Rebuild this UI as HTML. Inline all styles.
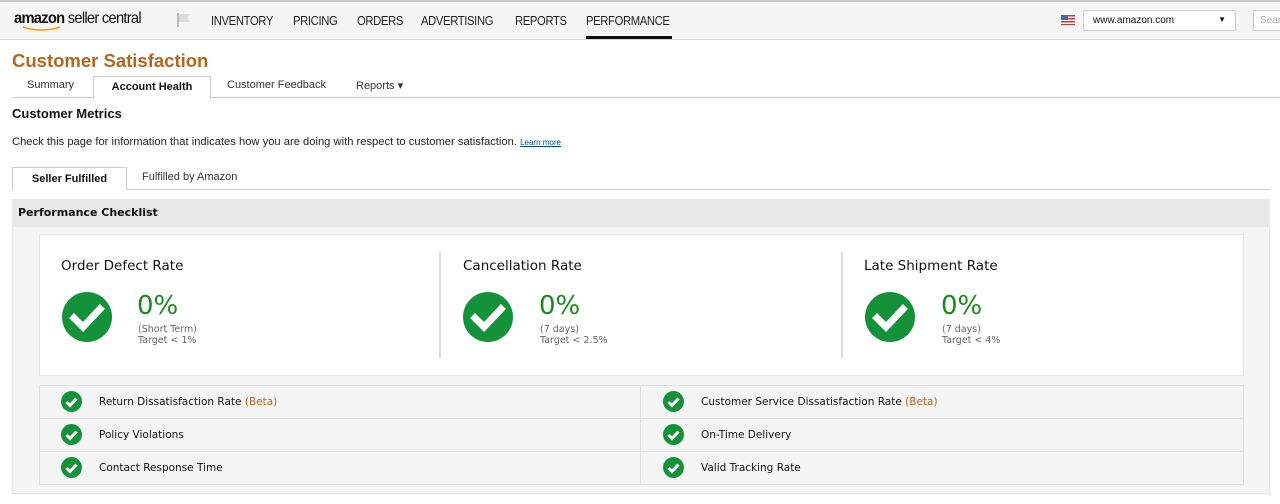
<!DOCTYPE html>
<html><head><meta charset="utf-8"><style>
*{box-sizing:border-box;margin:0;padding:0}
body{width:1280px;height:504px;overflow:hidden;background:#fff;font-family:"Liberation Sans",Arial,sans-serif;color:#111;position:relative}
.a{position:absolute;white-space:nowrap}
.top{position:absolute;left:0;top:0;width:1280px;height:40px;background:#f5f5f5;border-top:2px solid #ccc;border-bottom:1px solid #d5d5d5}
.nav{font-size:12.5px;color:#222;top:14px;letter-spacing:-0.4px;transform:scaleX(0.9);transform-origin:left}
.v{font-family:"DejaVu Sans",Verdana,sans-serif}
.chk{position:absolute;border-radius:50%;background:#13923a}
.chk svg{position:absolute;left:0;top:0;width:100%;height:100%}
</style></head><body>
<div class="top"></div>
<div class="a" style="left:14px;top:10px;font-size:16px;letter-spacing:-0.8px;transform:scaleX(0.92);transform-origin:left"><b>amazon</b> seller central</div>
<svg class="a" style="left:22px;top:26px" width="40" height="6"><path d="M1 1 Q20 7 38 1" stroke="#f90" stroke-width="1.6" fill="none"/></svg>
<svg class="a" style="left:176px;top:12px" width="16" height="16"><path d="M2 1 V15" stroke="#bbb" stroke-width="2"/><path d="M3 2 H14 L11 6 L14 10 H3Z" fill="#ddd"/></svg>
<div class="a nav" style="left:211px">INVENTORY</div>
<div class="a nav" style="left:293px">PRICING</div>
<div class="a nav" style="left:357px">ORDERS</div>
<div class="a nav" style="left:421px">ADVERTISING</div>
<div class="a nav" style="left:515px">REPORTS</div>
<div class="a nav" style="left:586px">PERFORMANCE</div>
<div class="a" style="left:586px;top:36px;width:86px;height:3px;background:#111"></div>
<div class="a" style="left:1061px;top:15px;width:14px;height:10px;background:repeating-linear-gradient(#c33 0 1.5px,#fff 1.5px 3px)"><div style="width:7px;height:5px;background:#46a"></div></div>
<div class="a" style="left:1083px;top:10px;width:153px;height:21px;background:#fff;border:1px solid #ccc;border-radius:2px;font-size:10px;padding:4px 9px">www.amazon.com<span style="position:absolute;right:9px;top:4px;font-size:8px">▼</span></div>
<div class="a" style="left:1253px;top:10px;width:40px;height:21px;background:#fff;border:1px solid #ccc;font-size:10px;color:#aaa;padding:4px 6px">Search</div>

<div class="a" style="left:12px;top:50px;font-size:18.5px;font-weight:bold;color:#b5651d">Customer Satisfaction</div>
<div class="a" style="left:12px;top:97px;width:1268px;height:1px;background:#ccc"></div>
<div class="a" style="left:27px;top:79px;font-size:11px;color:#333">Summary</div>
<div class="a" style="left:93px;top:76px;width:118px;height:23px;background:#fff;border:1px solid #ccc;border-bottom:none;font-size:11px;font-weight:bold;text-align:center;padding-top:4px">Account Health</div>
<div class="a" style="left:227px;top:79px;font-size:11px;color:#333">Customer Feedback</div>
<div class="a" style="left:356px;top:79px;font-size:11px;color:#333">Reports ▾</div>

<div class="a" style="left:12px;top:106px;font-size:13px;font-weight:bold">Customer Metrics</div>
<div class="a" style="left:12px;top:136px;font-size:11.2px;color:#222">Check this page for information that indicates how you are doing with respect to customer satisfaction. <span style="font-size:8px;color:#004b91;text-decoration:underline">Learn more</span></div>
<div class="a" style="left:12px;top:189px;width:1258px;height:1px;background:#ccc"></div>
<div class="a" style="left:12px;top:167px;width:115px;height:23px;background:#fff;border:1px solid #ccc;border-bottom:none;font-size:11px;font-weight:bold;text-align:center;padding-top:5px">Seller Fulfilled</div>
<div class="a" style="left:142px;top:171px;font-size:11px;color:#333">Fulfilled by Amazon</div>

<div class="a" style="left:12px;top:199px;width:1258px;height:295px;background:#f5f5f5;border:1px solid #e3e3e3"></div>
<div class="a" style="left:12px;top:199px;width:1258px;height:28px;background:#e8e8e8"></div>
<div class="a v" style="left:18px;top:206px;font-size:11px;font-weight:bold">Performance Checklist</div>
<div class="a" style="left:39px;top:234px;width:1205px;height:142px;background:#fff;border:1px solid #e5e5e5"></div>
<div class="a" style="left:439px;top:252px;width:2px;height:106px;background:#ddd"></div>
<div class="a" style="left:841px;top:252px;width:2px;height:106px;background:#ddd"></div>

<div class="a v" style="left:61px;top:258px;font-size:13.5px">Order Defect Rate</div>
<div class="chk" style="left:62px;top:292px;width:50px;height:50px"><svg viewBox="0 0 50 50"><path d="M12 26 L21 35 L38 17" stroke="#fff" stroke-width="7" fill="none" stroke-linecap="square"/></svg></div>
<div class="a v" style="left:137px;top:291px;font-size:26px;color:#1a8a1a">0%</div>
<div class="a v" style="left:138px;top:324px;font-size:9.5px;color:#666;line-height:11px">(Short Term)<br>Target &lt; 1%</div>

<div class="a v" style="left:463px;top:258px;font-size:13.5px">Cancellation Rate</div>
<div class="chk" style="left:463px;top:292px;width:50px;height:50px"><svg viewBox="0 0 50 50"><path d="M12 26 L21 35 L38 17" stroke="#fff" stroke-width="7" fill="none" stroke-linecap="square"/></svg></div>
<div class="a v" style="left:539px;top:291px;font-size:26px;color:#1a8a1a">0%</div>
<div class="a v" style="left:540px;top:324px;font-size:9.5px;color:#666;line-height:11px">(7 days)<br>Target &lt; 2.5%</div>

<div class="a v" style="left:864px;top:258px;font-size:13.5px">Late Shipment Rate</div>
<div class="chk" style="left:865px;top:292px;width:50px;height:50px"><svg viewBox="0 0 50 50"><path d="M12 26 L21 35 L38 17" stroke="#fff" stroke-width="7" fill="none" stroke-linecap="square"/></svg></div>
<div class="a v" style="left:941px;top:291px;font-size:26px;color:#1a8a1a">0%</div>
<div class="a v" style="left:942px;top:324px;font-size:9.5px;color:#666;line-height:11px">(7 days)<br>Target &lt; 4%</div>

<div class="a" style="left:39px;top:385px;width:1205px;height:100px;border:1px solid #e0e0e0;background:#f4f4f4"></div>
<div class="a" style="left:39px;top:418px;width:1205px;height:1px;background:#e0e0e0"></div>
<div class="a" style="left:39px;top:451px;width:1205px;height:1px;background:#e0e0e0"></div>
<div class="a" style="left:640px;top:385px;width:1px;height:100px;background:#e0e0e0"></div>

<div class="chk" style="left:61px;top:391px;width:21px;height:21px"><svg viewBox="0 0 21 21"><path d="M5.5 11 L9 14.5 L15.5 7.5" stroke="#fff" stroke-width="3" fill="none"/></svg></div>
<div class="chk" style="left:61px;top:424px;width:21px;height:21px"><svg viewBox="0 0 21 21"><path d="M5.5 11 L9 14.5 L15.5 7.5" stroke="#fff" stroke-width="3" fill="none"/></svg></div>
<div class="chk" style="left:61px;top:457px;width:21px;height:21px"><svg viewBox="0 0 21 21"><path d="M5.5 11 L9 14.5 L15.5 7.5" stroke="#fff" stroke-width="3" fill="none"/></svg></div>
<div class="chk" style="left:663px;top:391px;width:21px;height:21px"><svg viewBox="0 0 21 21"><path d="M5.5 11 L9 14.5 L15.5 7.5" stroke="#fff" stroke-width="3" fill="none"/></svg></div>
<div class="chk" style="left:663px;top:424px;width:21px;height:21px"><svg viewBox="0 0 21 21"><path d="M5.5 11 L9 14.5 L15.5 7.5" stroke="#fff" stroke-width="3" fill="none"/></svg></div>
<div class="chk" style="left:663px;top:457px;width:21px;height:21px"><svg viewBox="0 0 21 21"><path d="M5.5 11 L9 14.5 L15.5 7.5" stroke="#fff" stroke-width="3" fill="none"/></svg></div>

<div class="a v" style="left:99px;top:396px;font-size:10.5px">Return Dissatisfaction Rate <span style="color:#b5651d">(Beta)</span></div>
<div class="a v" style="left:99px;top:429px;font-size:10.5px">Policy Violations</div>
<div class="a v" style="left:99px;top:462px;font-size:10.5px">Contact Response Time</div>
<div class="a v" style="left:701px;top:396px;font-size:10.5px">Customer Service Dissatisfaction Rate <span style="color:#b5651d">(Beta)</span></div>
<div class="a v" style="left:701px;top:429px;font-size:10.5px">On-Time Delivery</div>
<div class="a v" style="left:701px;top:462px;font-size:10.5px">Valid Tracking Rate</div>
</body></html>
